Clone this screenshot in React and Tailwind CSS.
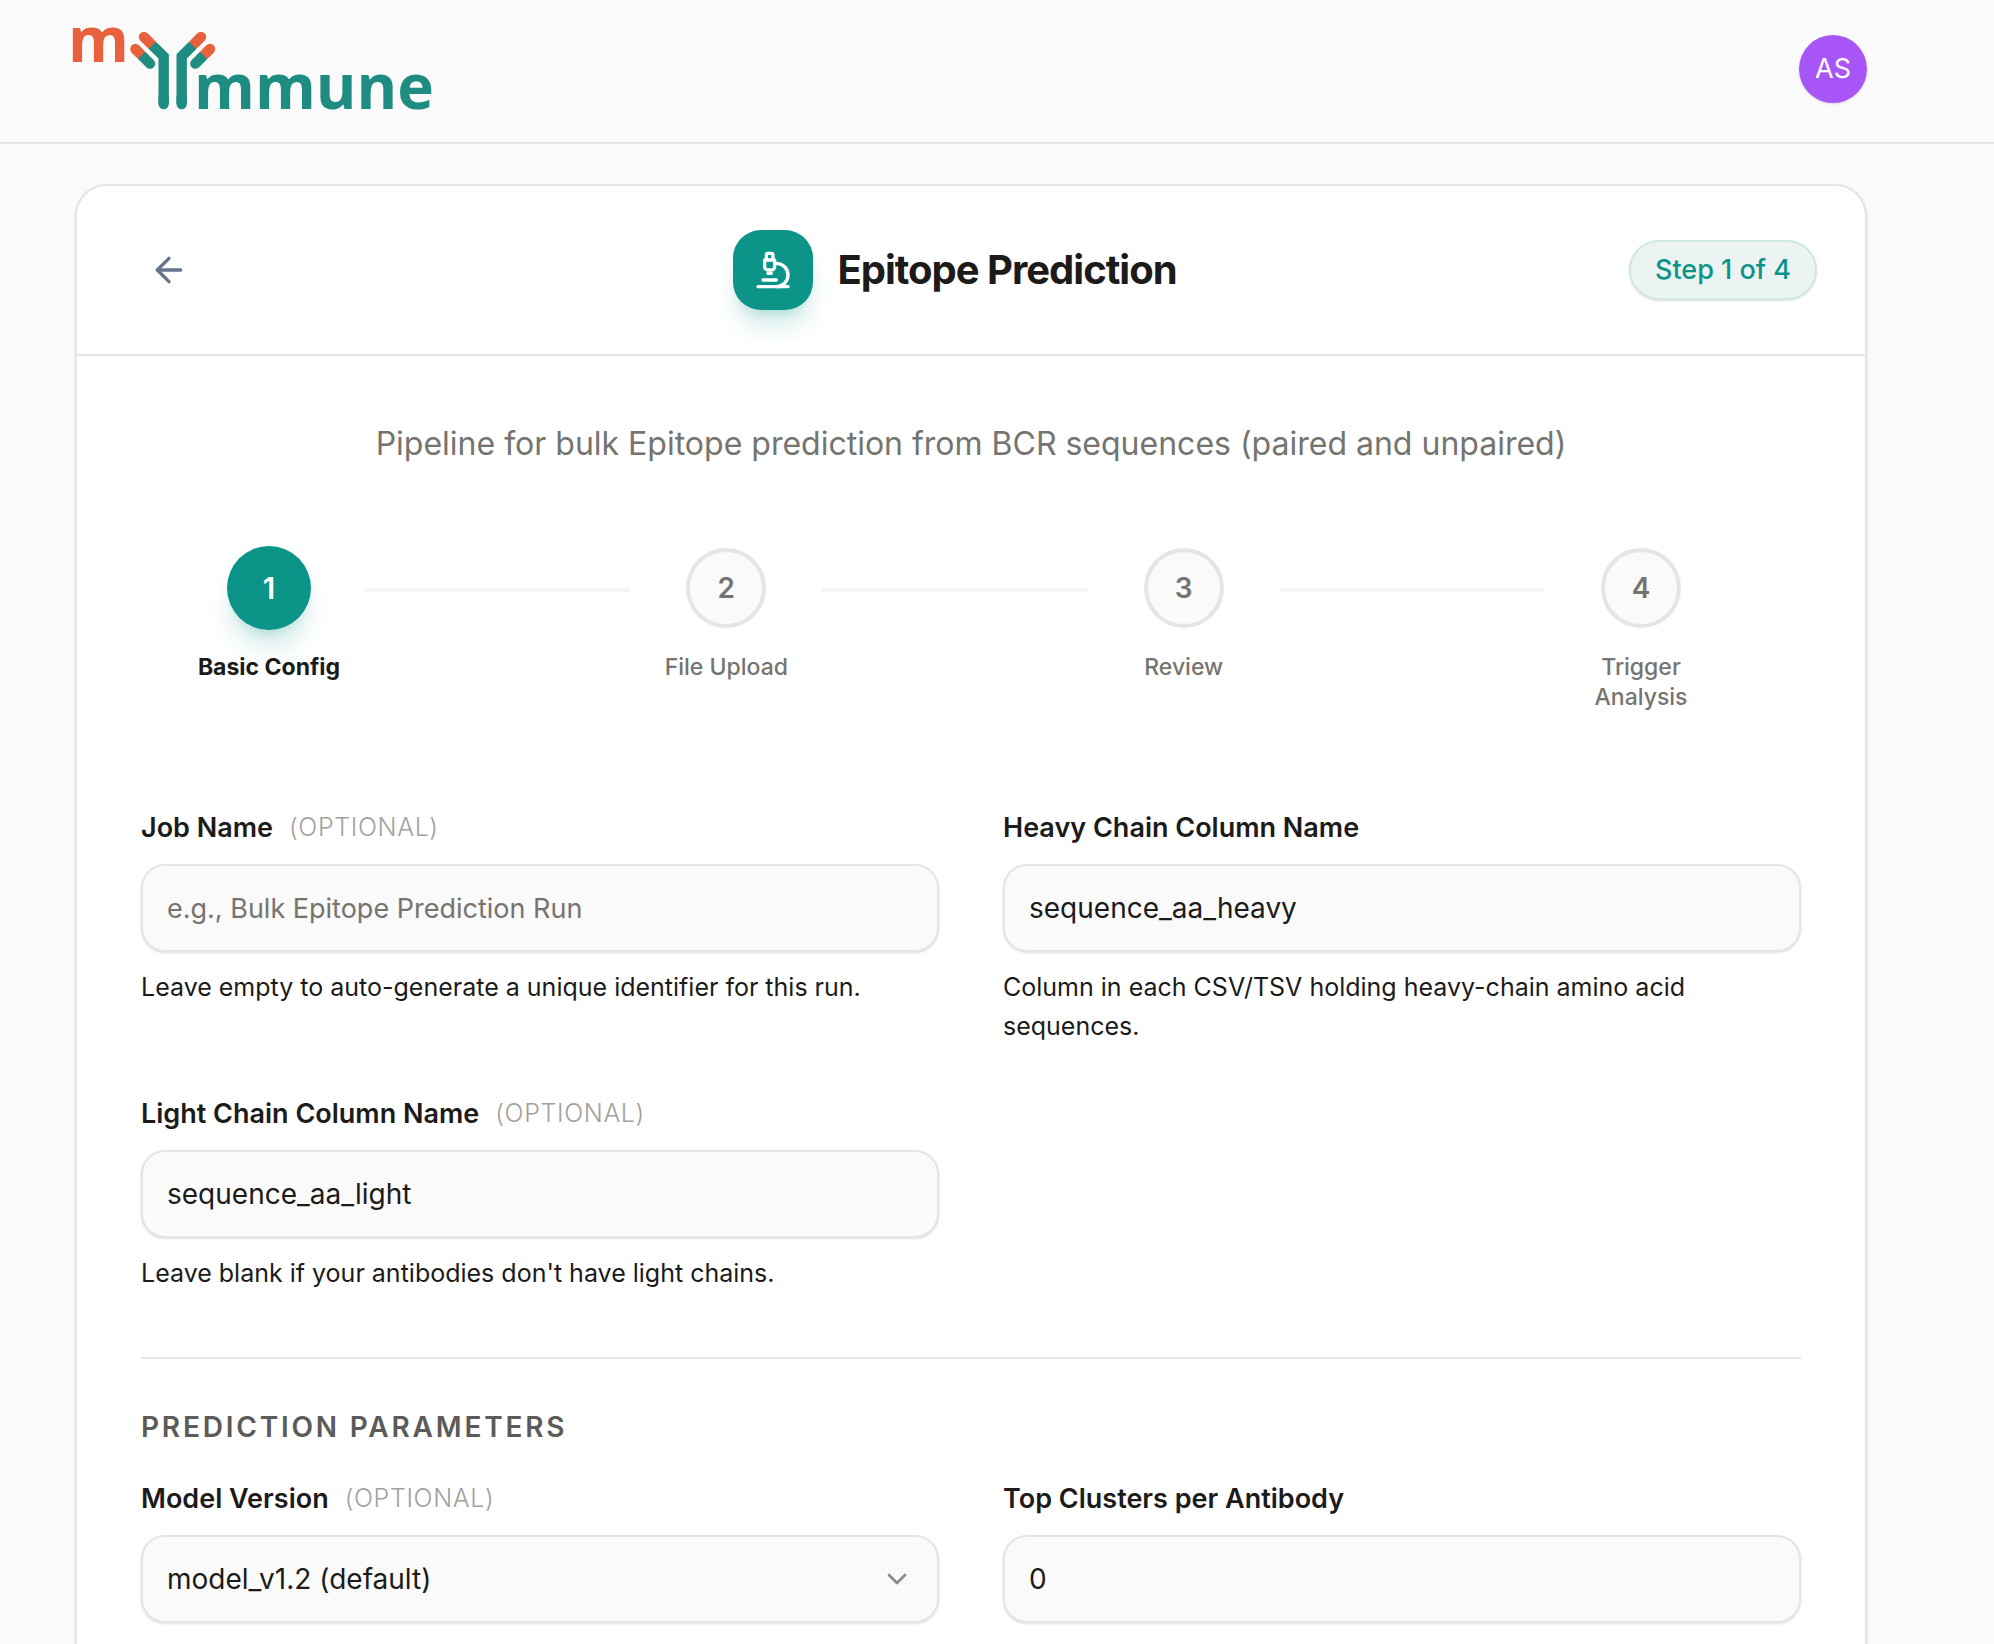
import { ArrowLeft, ChevronDown, Microscope } from "lucide-react";
import { useState } from "react";

const STEPS = ["Basic Config", "File Upload", "Review", "Trigger Analysis"];

const CONTROL_CLASS =
  "h-22 w-full rounded-3xl border-2 border-[#e5e5e5] bg-[#fafafa] px-6 text-[28px] text-[#1c1b1a] shadow-sm placeholder:text-[27px] placeholder:text-[#757470] focus:border-[#0d9488] focus:outline-none";

function Logo() {
  return (
    <svg
      viewBox="66 45 1092 264"
      className="h-[88px] w-[364px] overflow-visible"
      fontFamily="'Open Sans', 'Noto Sans', sans-serif"
      fontWeight="700"
      fontSize="186"
      role="img"
      aria-label="myImmune"
    >
      <text x="54" y="156" fill="#e8603c">
        m
      </text>
      <g fill="none" strokeWidth="31">
        <g stroke="#e8603c" strokeLinecap="round">
          <path d="M282 81L304 103" />
          <path d="M256 117L272 133" />
          <path d="M453 81L431 103" />
          <path d="M480 117L464 133" />
        </g>
        <g stroke="#1f8c82">
          <path d="M307 106L341 139V282" />
          <path d="M428 106L395 139V282" />
          <path d="M275 136L288 149" />
          <path d="M461 136L448 149" />
        </g>
        <g stroke="#1f8c82" strokeLinecap="round">
          <path d="M341 260V282" />
          <path d="M395 260V282" />
          <path d="M290 151L300 161" />
          <path d="M446 151L436 161" />
        </g>
      </g>
      <text x="432" y="297" fill="#1f8c82">
        mmune
      </text>
    </svg>
  );
}

function Stepper({ current }) {
  return (
    <ol className="mt-20 flex items-start pr-24 pl-16">
      {STEPS.map((label, index) => {
        const active = index + 1 === current;
        return (
          <li key={label} className={index > 0 ? "flex flex-1 items-start" : "flex items-start"}>
            {index > 0 && <div className="mx-8 mt-10 h-1 flex-1 bg-[#f5f5f5]" />}
            <div className="flex w-32 flex-col items-center gap-6">
              <div
                className={`flex size-20 items-center justify-center rounded-full text-[28px] font-semibold ${
                  active
                    ? "scale-105 bg-[#0d9488] text-white shadow-xl shadow-[#0d9488]/20"
                    : "border-4 border-[#e5e5e5] bg-[#fafafa] text-[#757470]"
                }`}
              >
                {index + 1}
              </div>
              <span
                className={`-mx-4 text-center text-[23px] leading-[30px] ${
                  active ? "font-bold whitespace-nowrap text-[#1c1b1a]" : "font-medium text-[#757470]"
                }`}
              >
                {label}
              </span>
            </div>
          </li>
        );
      })}
    </ol>
  );
}

function Field({ id, label, optional, hint, children }) {
  return (
    <div>
      <div className="flex h-10 items-center gap-4">
        <label htmlFor={id} className="text-[27px] font-semibold text-[#1c1b1a]">
          {label}
        </label>
        {optional && <span className="text-[25px] font-light tracking-wide text-[#a3a19e] uppercase">(Optional)</span>}
      </div>
      <div className="relative mt-4">{children}</div>
      {hint && <p className="mt-4 text-[25px] leading-[39px] text-[#1c1b1a]">{hint}</p>}
    </div>
  );
}

export default function App() {
  const [form, setForm] = useState({
    jobName: "",
    heavyColumn: "sequence_aa_heavy",
    lightColumn: "sequence_aa_light",
    modelVersion: "model_v1.2",
    topClusters: "0",
  });

  const handleChange = (event) => {
    const { name, value } = event.target;
    setForm((prev) => ({ ...prev, [name]: value }));
  };

  return (
    <div className="flex min-h-screen flex-col bg-[#fafafa] font-[Inter,sans-serif] text-[#1c1b1a]">
      <header className="flex h-36 items-center justify-between border-b-2 border-[#e5e5e5] pr-[127px] pb-1 pl-[72px]">
        <a href="#home">
          <Logo />
        </a>
        <button
          type="button"
          className="flex size-[68px] items-center justify-center rounded-full bg-[#a855f7] text-[27px] text-white shadow-sm"
        >
          AS
        </button>
      </header>

      <main className="flex flex-1 flex-col pt-10 pr-[127px] pl-[75px]">
        <section className="flex-1 rounded-t-[32px] border-2 border-b-0 border-[#e5e5e5] bg-white shadow-sm">
          <div className="grid grid-cols-[1fr_auto_1fr] items-center border-b-2 border-[#e5e5e5] px-12 py-11">
            <button
              type="button"
              aria-label="Back"
              className="flex h-20 w-22 items-center justify-center rounded-3xl text-[#64748b]"
            >
              <ArrowLeft size={40} />
            </button>
            <div className="flex items-center gap-6 pr-8">
              <div className="flex size-20 items-center justify-center rounded-[28px] bg-[#0d9488] text-white shadow-xl shadow-[#0d9488]/20">
                <Microscope size={40} />
              </div>
              <h1 className="text-[40px] font-bold tracking-tight">Epitope Prediction</h1>
            </div>
            <span className="flex h-15 items-center justify-self-end rounded-full border-2 border-[#cfe8e3] bg-[#ebf4f3] px-6 text-[27px] font-medium text-[#0d9488] shadow-sm">
              Step 1 of 4
            </span>
          </div>

          <div className="px-16 pt-16 pb-5">
            <p className="text-center text-[32px] leading-[48px] text-[#757470]">
              Pipeline for bulk Epitope prediction from BCR sequences (paired and unpaired)
            </p>

            <Stepper current={1} />

            <form className="mt-24">
              <div className="grid grid-cols-2 gap-x-16 gap-y-12">
                <Field
                  id="jobName"
                  label="Job Name"
                  optional
                  hint="Leave empty to auto-generate a unique identifier for this run."
                >
                  <input
                    id="jobName"
                    name="jobName"
                    type="text"
                    placeholder="e.g., Bulk Epitope Prediction Run"
                    value={form.jobName}
                    onChange={handleChange}
                    className={CONTROL_CLASS}
                  />
                </Field>
                <Field
                  id="heavyColumn"
                  label="Heavy Chain Column Name"
                  hint="Column in each CSV/TSV holding heavy-chain amino acid sequences."
                >
                  <input
                    id="heavyColumn"
                    name="heavyColumn"
                    type="text"
                    value={form.heavyColumn}
                    onChange={handleChange}
                    className={CONTROL_CLASS}
                  />
                </Field>
                <Field
                  id="lightColumn"
                  label="Light Chain Column Name"
                  optional
                  hint="Leave blank if your antibodies don't have light chains."
                >
                  <input
                    id="lightColumn"
                    name="lightColumn"
                    type="text"
                    value={form.lightColumn}
                    onChange={handleChange}
                    className={CONTROL_CLASS}
                  />
                </Field>
              </div>

              <div className="mt-16 border-t-2 border-[#e5e5e5] pt-12">
                <h2 className="text-[28px] leading-10 font-semibold tracking-widest text-[#5c5b5a] uppercase">
                  Prediction Parameters
                </h2>
                <div className="mt-8 grid grid-cols-2 gap-x-16 gap-y-12">
                  <Field id="modelVersion" label="Model Version" optional>
                    <select
                      id="modelVersion"
                      name="modelVersion"
                      value={form.modelVersion}
                      onChange={handleChange}
                      className={`${CONTROL_CLASS} appearance-none`}
                    >
                      <option value="model_v1.2">model_v1.2 (default)</option>
                    </select>
                    <ChevronDown
                      size={32}
                      className="pointer-events-none absolute top-7 right-[26px] text-[#8a8a8a]"
                    />
                  </Field>
                  <Field id="topClusters" label="Top Clusters per Antibody">
                    <input
                      id="topClusters"
                      name="topClusters"
                      type="text"
                      inputMode="numeric"
                      value={form.topClusters}
                      onChange={handleChange}
                      className={CONTROL_CLASS}
                    />
                  </Field>
                </div>
              </div>
            </form>
          </div>
        </section>
      </main>
    </div>
  );
}
